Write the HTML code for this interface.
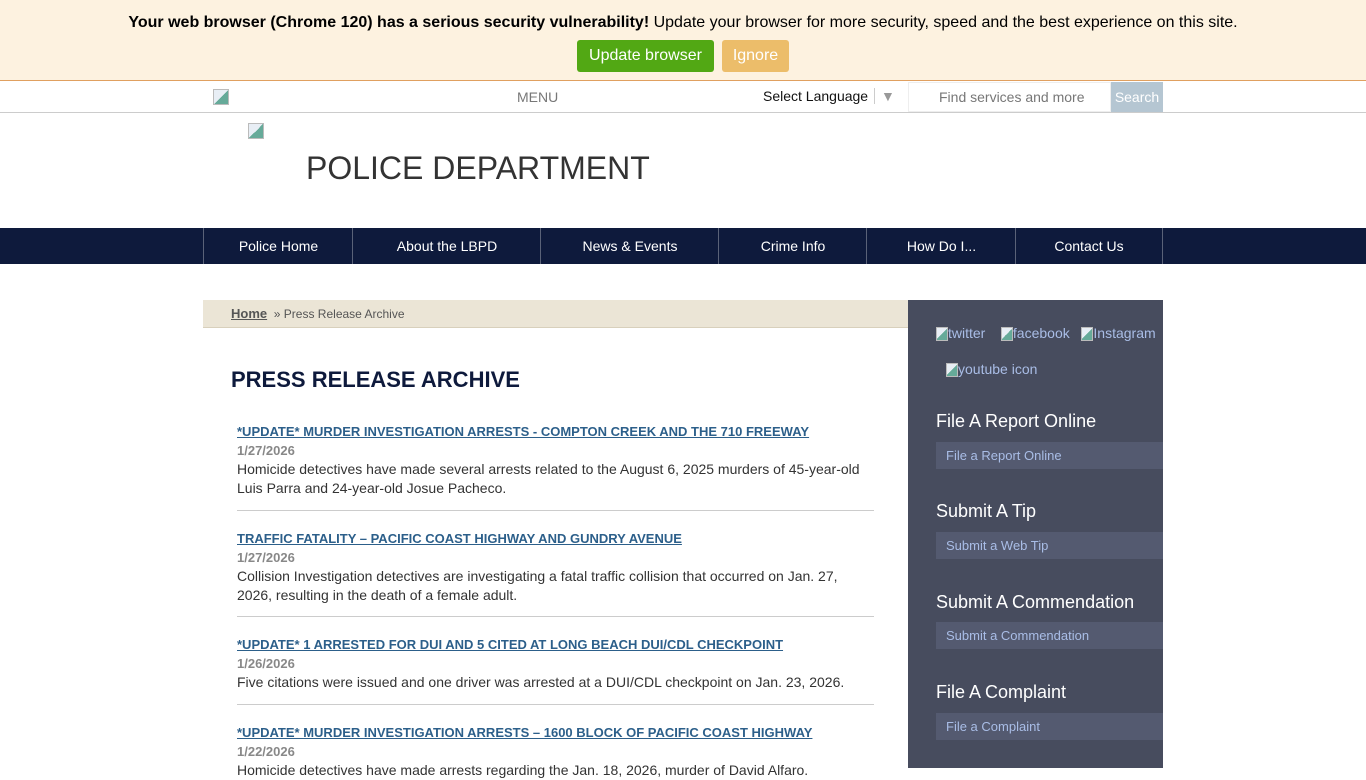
<!DOCTYPE html>
<html><head><meta charset="utf-8"><style>
*{margin:0;padding:0;box-sizing:border-box}
body{width:1366px;height:768px;overflow:hidden;background:#fff;font-family:"Liberation Sans",Arial,sans-serif;position:relative}
.a{position:absolute}
.img{display:inline-block;width:16px;height:16px;border:1px solid #bbb;background:linear-gradient(135deg,#e8eef5 50%,#6a9 50%);vertical-align:middle}
.nav div{position:absolute;top:0;height:36px;line-height:36px;text-align:center;color:#fff;font-size:14px;border-left:1px solid #5a6278}
.item{position:absolute;left:237px;width:637px}
.item a{color:#2c5f8a;font-weight:bold;font-size:13px;text-decoration:underline}
.item .d{color:#888;font-weight:bold;font-size:13px;margin-top:2px}
.item p{color:#333;font-size:14px;line-height:19px;margin-top:2px}
.sb h3{position:absolute;left:936px;color:#fff;font-weight:normal;font-size:18px}
.sb .l{position:absolute;left:936px;width:227px;height:27px;background:#545a70;color:#a9bde6;font-size:13px;line-height:27px;padding-left:10px}
</style></head><body>
<div class="a" style="left:0;top:0;width:1366px;height:81px;background:#fdf2e0;border-bottom:1px solid #e0a060"></div>
<div class="a" style="left:0;top:14px;width:1366px;text-align:center;font-size:16px;color:#000"><b>Your web browser (Chrome 120) has a serious security vulnerability!</b> Update your browser for more security, speed and the best experience on this site.</div>
<div class="a" style="left:577px;top:40px;width:137px;height:32px;background:#52a814;border-radius:3px;color:#fff;font-size:16px;line-height:32px;text-align:center">Update browser</div>
<div class="a" style="left:722px;top:40px;width:67px;height:32px;background:#ecbd6a;border-radius:3px;color:#fff;font-size:16px;line-height:32px;text-align:center">Ignore</div>
<div class="a" style="left:0;top:112px;width:1366px;height:1px;background:#ccc"></div>
<div class="a" style="left:213px;top:88px"><span class="img"></span></div>
<div class="a" style="left:517px;top:89px;font-size:14px;color:#777">MENU</div>
<div class="a" style="left:763px;top:88px;font-size:14px;color:#111">Select Language <span style="color:#999;border-left:1px solid #ccc;padding-left:6px;margin-left:2px">▼</span></div>
<div class="a" style="left:908px;top:82px;width:203px;height:30px;border:1px solid #eee;font-size:14px;color:#777;line-height:28px;padding-left:30px">Find services and more</div>
<div class="a" style="left:1111px;top:82px;width:52px;height:30px;background:#b5c6d2;color:#fff;font-size:14px;line-height:30px;text-align:center">Search</div>
<div class="a" style="left:248px;top:122px"><span class="img"></span></div>
<div class="a" style="left:306px;top:150px;font-size:32px;color:#333">POLICE DEPARTMENT</div>
<div class="a nav" style="left:0;top:228px;width:1366px;height:36px;background:#0e1a3c">
<div style="left:203px;width:150px">Police Home</div>
<div style="left:352px;width:189px">About the LBPD</div>
<div style="left:540px;width:179px">News &amp; Events</div>
<div style="left:718px;width:149px">Crime Info</div>
<div style="left:866px;width:150px">How Do I...</div>
<div style="left:1015px;width:148px;border-right:1px solid #5a6278">Contact Us</div>
</div>
<div class="a" style="left:203px;top:300px;width:705px;height:28px;background:#ebe5d6;border-bottom:1px solid #d8d0bc"></div>
<div class="a" style="left:231px;top:306px;font-size:12px;color:#555"><u style="font-size:13px;font-weight:bold;color:#555">Home</u> &nbsp;» Press Release Archive</div>
<div class="a" style="left:231px;top:367px;font-size:22px;font-weight:bold;color:#0e1a3c">PRESS RELEASE ARCHIVE</div>
<div class="item" style="top:423px"><a>*UPDATE* MURDER INVESTIGATION ARRESTS - COMPTON CREEK AND THE 710 FREEWAY</a><div class="d">1/27/2026</div><p>Homicide detectives have made several arrests related to the August 6, 2025 murders of 45-year-old Luis Parra and 24-year-old Josue Pacheco.</p></div>
<div class="a" style="left:237px;top:510px;width:637px;height:1px;background:#ccc"></div>
<div class="item" style="top:530px"><a>TRAFFIC FATALITY – PACIFIC COAST HIGHWAY AND GUNDRY AVENUE</a><div class="d">1/27/2026</div><p>Collision Investigation detectives are investigating a fatal traffic collision that occurred on Jan. 27, 2026, resulting in the death of a female adult.</p></div>
<div class="a" style="left:237px;top:616px;width:637px;height:1px;background:#ccc"></div>
<div class="item" style="top:636px"><a>*UPDATE* 1 ARRESTED FOR DUI AND 5 CITED AT LONG BEACH DUI/CDL CHECKPOINT</a><div class="d">1/26/2026</div><p>Five citations were issued and one driver was arrested at a DUI/CDL checkpoint on Jan. 23, 2026.</p></div>
<div class="a" style="left:237px;top:704px;width:637px;height:1px;background:#ccc"></div>
<div class="item" style="top:724px"><a>*UPDATE* MURDER INVESTIGATION ARRESTS – 1600 BLOCK OF PACIFIC COAST HIGHWAY</a><div class="d">1/22/2026</div><p>Homicide detectives have made arrests regarding the Jan. 18, 2026, murder of David Alfaro.</p></div>
<div class="sb">
<div class="a" style="left:908px;top:300px;width:255px;height:468px;background:#474c5e"></div>
<div class="a" style="left:936px;top:325px;font-size:14px;color:#a9bde6;white-space:nowrap"><span class="img" style="width:12px;height:14px"></span>twitter &nbsp;&nbsp;&nbsp;<span class="img" style="width:12px;height:14px"></span>facebook &nbsp;&nbsp;<span class="img" style="width:12px;height:14px"></span>Instagram</div>
<div class="a" style="left:946px;top:361px;font-size:14px;color:#a9bde6"><span class="img" style="width:12px;height:14px"></span>youtube icon</div>
<h3 style="top:411px">File A Report Online</h3><div class="l" style="top:442px">File a Report Online</div>
<h3 style="top:501px">Submit A Tip</h3><div class="l" style="top:532px">Submit a Web Tip</div>
<h3 style="top:592px">Submit A Commendation</h3><div class="l" style="top:622px">Submit a Commendation</div>
<h3 style="top:682px">File A Complaint</h3><div class="l" style="top:713px">File a Complaint</div>
</div>
</body></html>
